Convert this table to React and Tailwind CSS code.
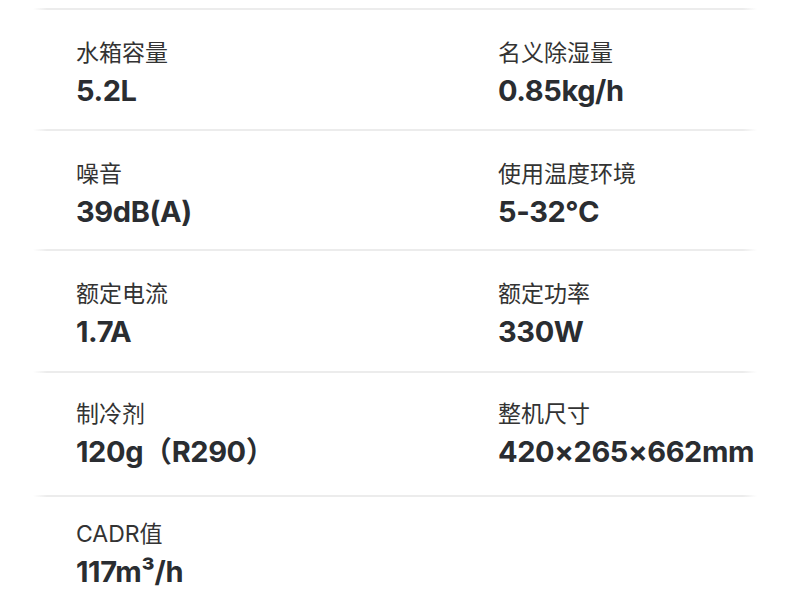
import React from 'react';

const rows = [
  { h: 'h-[119px]', pt: 'pt-[28px]', items: [['水箱容量', '5.2L'], ['名义除湿量', '0.85kg/h']] },
  { h: 'h-[118px]', pt: 'pt-[28px]', items: [['噪音', '39dB(A)'], ['使用温度环境', '5-32℃']] },
  { h: 'h-[120px]', pt: 'pt-[28px]', items: [['额定电流', '1.7A'], ['额定功率', '330W']] },
  { h: 'h-[122px]', pt: 'pt-[26px]', items: [['制冷剂', '120g（R290）'], ['整机尺寸', '420×265×662mm']] },
  { h: 'h-[110px]', pt: 'pt-[22px]', items: [['CADR值', '117m³/h']], last: true },
];

function Divider() {
  return (
    <div className="h-[2px] mx-[33px] bg-[linear-gradient(to_right,transparent,#ececec_14px,#ececec_calc(100%-14px),transparent)]" />
  );
}

function Spec({ label, value }) {
  return (
    <div className="flex flex-col">
      <div className="text-[23px] leading-[30px] text-[#333] font-['Inter','Noto_Sans_CJK_SC',sans-serif]">
        {label}
      </div>
      <div className="mt-[5px] text-[29px] leading-[36px] font-bold text-[#2a2d31] tracking-[-0.4px] font-['Inter','Noto_Sans_CJK_SC',sans-serif]">
        {value}
      </div>
    </div>
  );
}

export default function App() {
  return (
    <div className="w-[790px] h-[607px] bg-white overflow-hidden">
      <div className="h-[8px]" />
      <Divider />
      {rows.map((row, i) => (
        <div key={i}>
          <div className={`${row.h} ${row.pt} pl-[76px] grid grid-cols-[422px_1fr]`}>
            {row.items.map(([label, value]) => (
              <Spec key={label} label={label} value={value} />
            ))}
          </div>
          {!row.last && <Divider />}
        </div>
      ))}
    </div>
  );
}
